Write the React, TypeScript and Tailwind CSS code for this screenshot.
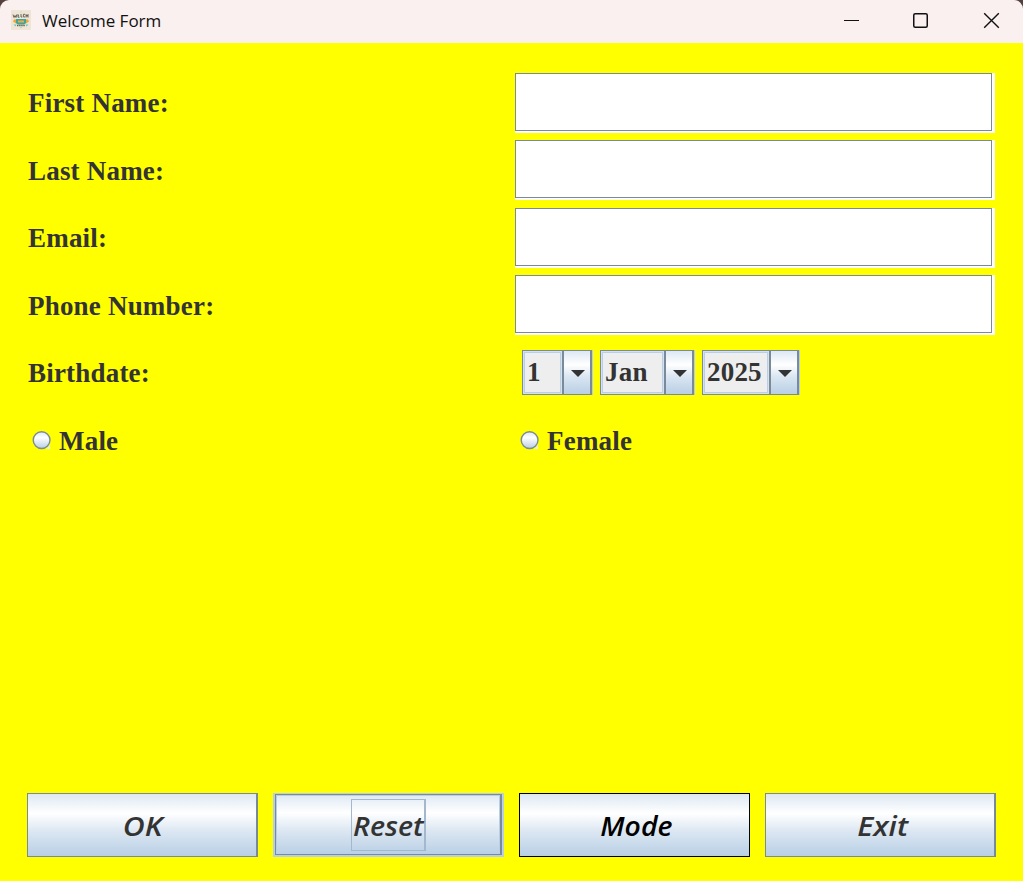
import type { ReactNode } from "react";

function AppIcon() {
  return (
    <svg width="20" height="20" viewBox="0 0 20 20">
      <rect width="20" height="20" fill="#efe5d6" />
      <path d="M2 4.5l1 3 1-2 1 2 .8-3M7 4.2v3h1.5M7 5.7h1M10 4v3h1.3M14 4.3h-1.6v2.6H14M15 7.5v-3l1 2 1-2v3" stroke="#66665e" strokeWidth="1" fill="none" />
      <path d="M3 9.5h14l1 2-3 2H5l-3-2z" fill="#eda63c" />
      <path d="M5 9h10v4l-2 1.5H7L5 13z" fill="#3fa69b" />
      <path d="M7 10.5h6v2H7z" fill="#efaa45" />
      <path d="M2.5 14.5h3l-1 2zM14.5 14.5h3l-2 2z" fill="#65c5c5" />
      <path d="M6 15.5h8" stroke="#67635b" strokeWidth="1.5" strokeDasharray="1.5 .6" />
      <path d="M9 17h2l-1 1.5zM9.5 1.5h1v1h-1z" fill="#a8cfc4" />
    </svg>
  );
}

function TitleBar() {
  return (
    <div className="bg-[#54403e]">
      <header className="flex h-[43px] items-start rounded-t-[9px] bg-[#f9f0ef] pl-[11px]">
        <div className="pt-[10px]"><AppIcon /></div>
        <h1 className="ml-[11px] mt-[9px] flex-1 whitespace-nowrap font-['Open_Sans',sans-serif] text-[17px] leading-6 text-[#111]">Welcome Form</h1>
        <svg width="179" height="43" viewBox="844 0 179 43" fill="none" stroke="#111">
          <path d="M844 20.5h15" />
          <rect x="913.75" y="13.75" width="13.5" height="13.5" rx="1.5" strokeWidth="1.5" />
          <path d="M984.2 13.2l14.6 14.6M998.8 13.2l-14.6 14.6" strokeWidth="1.4" />
        </svg>
      </header>
    </div>
  );
}

const labelText = "whitespace-nowrap font-['Liberation_Serif',serif] text-[27px] font-bold leading-[30px] tracking-[0.2px] text-[#333]";

function TextRow({ label, height, labelTop }: { label: string; height: string; labelTop: string }) {
  return (
    <div className={`flex items-start ${height}`}>
      <label className={`w-[487px] ${labelTop} ${labelText}`}>{label}</label>
      <div className="h-[60px] w-[480px] bg-white pb-[2px] pr-[3px]">
        <input aria-label={label} className="block h-[58px] w-[477px] border border-[#7a8a99] bg-white px-1 outline-none" />
      </div>
    </div>
  );
}

function Combo({ value, valueWidth, width }: { value: string; valueWidth: string; width: string }) {
  return (
    <div className={`flex h-[45px] border border-r-2 border-[#7a8a99] shadow-[1px_0_0_#b8cfe5] ${width}`}>
      <div className={`border border-[#d5e1ec] bg-[#eee] ${valueWidth}`}>
        <div className={`h-full border border-[#b8cfe5] pl-[2px] pt-[4px] ${labelText}`}>{value}</div>
      </div>
      <div className="flex flex-1 items-center justify-center border-l-2 border-[#7a8a99] bg-[linear-gradient(#dde8f3_0%,#fff_32%,#dce7f2_58%,#b8cfe5_100%)] pl-[2px] pt-px">
        <svg width="14" height="7" viewBox="0 0 14 7" fill="#333"><path d="M0 0h14L7 7z" /></svg>
      </div>
    </div>
  );
}

function Radio({ label }: { label: string }) {
  return (
    <div className="flex w-[488px] items-center pl-[4px]">
      <svg width="19" height="19" viewBox="0 0 19 19">
        <defs>
          <linearGradient id={`radio-${label}`} x1="0" y1="0" x2="0" y2="1">
            <stop offset="0" stopColor="#dde8f3" />
            <stop offset=".35" stopColor="#fff" />
            <stop offset="1" stopColor="#b8cfe5" />
          </linearGradient>
        </defs>
        <path d="M14 18h4v-4z" fill="#e4edf5" />
        <circle cx="9.6" cy="9.1" r="8.4" fill={`url(#radio-${label})`} stroke="#7a8a99" strokeWidth="1.4" />
      </svg>
      <span className={`ml-[8px] mt-px ${labelText}`}>{label}</span>
    </div>
  );
}

function Button({ children, frame }: { children: ReactNode; frame: string }) {
  return (
    <button className={`flex h-16 w-[231px] items-center justify-center whitespace-nowrap bg-[linear-gradient(#dde8f3_0%,#fff_31%,#dce7f2_60%,#b8cfe5_100%)] font-['Open_Sans',sans-serif] text-[27px] font-semibold italic leading-[30px] ${frame}`}>
      {children}
    </button>
  );
}

export default function App() {
  return (
    <div className="flex h-[881px] w-[1023px] flex-col overflow-hidden bg-[#ff0]">
      <TitleBar />
      <main className="flex flex-1 flex-col pl-[28px] pt-[30px]">
        <TextRow label="First Name:" height="h-[67px]" labelTop="pt-[15px]" />
        <TextRow label="Last Name:" height="h-[68px]" labelTop="pt-[16px]" />
        <TextRow label="Email:" height="h-[67px]" labelTop="pt-[15px]" />
        <TextRow label="Phone Number:" height="h-[68px]" labelTop="pt-[16px]" />
        <div className="flex h-[67px] items-start">
          <span className={`w-[494px] pt-[15px] ${labelText}`}>Birthdate:</span>
          <div className="flex pt-[7px]">
            <Combo value="1" valueWidth="w-[39px]" width="w-[70px]" />
            <div className="pl-[8px]"><Combo value="Jan" valueWidth="w-[63px]" width="w-[94px]" /></div>
            <div className="pl-[8px]"><Combo value="2025" valueWidth="w-[66px]" width="w-[97px]" /></div>
          </div>
        </div>
        <div className="flex h-[60px] items-center">
          <Radio label="Male" />
          <Radio label="Female" />
        </div>
      </main>
      <footer className="flex h-[88px] gap-[15px] pl-[27px]">
        <Button frame="border border-r-2 border-[#7a8a99] pt-[2px] text-[#333]"><span className="ml-[2px] inline-block scale-x-[1.12]">OK</span></Button>
        <Button frame="border-2 border-t border-[#b8cfe5] text-[#333]">
          <span className="flex h-full w-full border border-r-2 border-[#7a8a99]">
            <span className="flex h-full w-full items-center justify-center border border-b-0 border-[#b8cfe5]">
              <span className="flex h-[52px] w-[75px] items-center justify-center border border-r-2 border-[#a3b8cc] pt-[2px]"><span className="ml-[2px] inline-block scale-x-[1.06]">Reset</span></span>
            </span>
          </span>
        </Button>
        <Button frame="border border-black pt-[2px] text-black"><span className="ml-[3px] inline-block scale-x-[1.05]">Mode</span></Button>
        <Button frame="border border-r-2 border-[#7a8a99] pt-[2px] text-[#333]"><span className="ml-[5px] inline-block scale-x-[1.12]">Exit</span></Button>
      </footer>
    </div>
  );
}
